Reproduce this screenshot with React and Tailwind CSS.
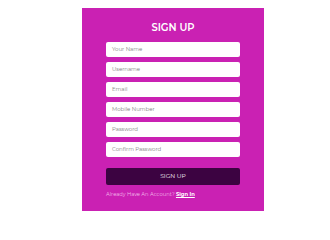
export default function App() {
  const fields = ["Your Name", "Username", "Email", "Mobile Number", "Password", "Confirm Password"];
  return (
    <div className="w-[330px] h-[220px] bg-white pt-[8px] pl-[82px]" style={{ fontFamily: "Montserrat, 'Open Sans', 'Liberation Sans', sans-serif" }}>
      <div className="w-[182px] h-[203px] bg-[#ca21b3] px-[24px] pt-[13px] flex flex-col">
        <div className="h-[14px] leading-[14px] text-center text-white text-[10px] font-semibold">SIGN UP</div>
        <div className="mt-[7px] flex flex-col gap-[5px]">
          {fields.map((f) => (
            <div key={f} className="h-[15px] bg-white rounded-[2px] pl-[6px] flex items-center text-[5.4px] text-[#808080]">
              {f}
            </div>
          ))}
        </div>
        <div className="mt-[11px] h-[17px] bg-[#3c0341] rounded-[2px] flex items-center justify-center text-white text-[6px]">
          SIGN UP
        </div>
        <div className="mt-[5px] text-[5.2px] leading-[8px] text-[#f3b9ea]">
          Already Have An Account? <span className="text-white font-bold underline">Sign In</span>
        </div>
      </div>
    </div>
  );
}
